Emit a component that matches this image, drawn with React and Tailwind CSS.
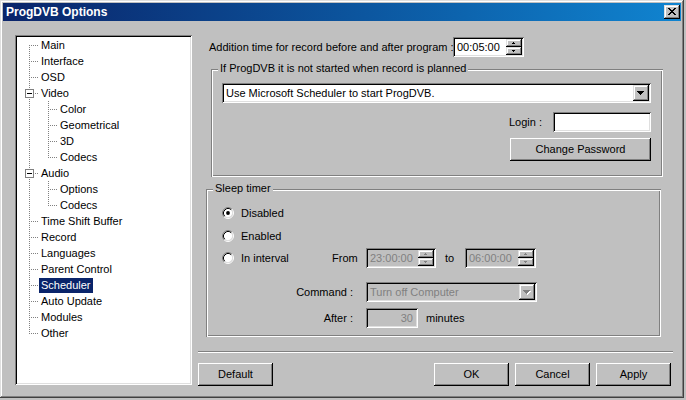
import React from "react";

const raised =
  "shadow-[inset_-1px_-1px_0_#000,inset_1px_1px_0_#fff,inset_-2px_-2px_0_#808080]";
const raised4 =
  "shadow-[inset_-1px_-1px_0_#000,inset_1px_1px_0_#dfdfdf,inset_-2px_-2px_0_#808080,inset_2px_2px_0_#fff]";
const sunken =
  "shadow-[inset_1px_1px_0_#808080,inset_-1px_-1px_0_#fff,inset_2px_2px_0_#000,inset_-2px_-2px_0_#dfdfdf]";
const etched =
  "shadow-[inset_1px_1px_0_#808080,inset_-1px_-1px_0_#fff,inset_2px_2px_0_#fff,inset_-2px_-2px_0_#808080]";

function Radio({ checked }) {
  return (
    <svg width="12" height="12" viewBox="0 0 12 12" className="shrink-0">
      <circle cx="6" cy="6" r="4.5" fill="#fff" />
      <path d="M2.11 9.89 A5.5 5.5 0 0 1 9.89 2.11" fill="none" stroke="#808080" />
      <path d="M9.89 2.11 A5.5 5.5 0 0 1 2.11 9.89" fill="none" stroke="#fff" />
      <path d="M2.82 9.18 A4.5 4.5 0 0 1 9.18 2.82" fill="none" stroke="#000" />
      <path d="M9.18 2.82 A4.5 4.5 0 0 1 2.82 9.18" fill="none" stroke="#dfdfdf" />
      {checked && <circle cx="6" cy="6" r="1.9" fill="#000" />}
    </svg>
  );
}

function Spin({ disabled }) {
  const c = disabled ? "#808080" : "#000";
  return (
    <div className="flex flex-col w-[16px] h-[16px] shrink-0">
      <div className={"h-[8px] w-[16px] bg-[#c0c0c0] " + raised4}>
        <svg width="16" height="8" className="block">
          <rect x="7" y="3" width="1" height="1" fill={c} />
          <rect x="6" y="4" width="3" height="1" fill={c} />
        </svg>
      </div>
      <div className={"h-[8px] w-[16px] bg-[#c0c0c0] " + raised4}>
        <svg width="16" height="8" className="block">
          <rect x="6" y="3" width="3" height="1" fill={c} />
          <rect x="7" y="4" width="1" height="1" fill={c} />
        </svg>
      </div>
    </div>
  );
}

function DropArrow({ disabled }) {
  const c = disabled ? "#808080" : "#000";
  return (
    <svg width="12" height="12" className="block">
      {disabled && (
        <g fill="#fff">
          <rect x="3" y="5" width="7" height="1" />
          <rect x="4" y="6" width="5" height="1" />
          <rect x="5" y="7" width="3" height="1" />
          <rect x="6" y="8" width="1" height="1" />
        </g>
      )}
      <g fill={c}>
        <rect x="2" y="4" width="7" height="1" />
        <rect x="3" y="5" width="5" height="1" />
        <rect x="4" y="6" width="3" height="1" />
        <rect x="5" y="7" width="1" height="1" />
      </g>
    </svg>
  );
}

function TimeField({ value, disabled, className }) {
  return (
    <div
      className={
        "flex items-center h-[20px] p-[2px] " +
        sunken +
        " " +
        (disabled ? "bg-[#c0c0c0] text-[#808080] " : "bg-white text-black ") +
        className
      }
    >
      <span className="flex-1 pl-[2px] leading-[13px] whitespace-nowrap">{value}</span>
      <Spin disabled={disabled} />
    </div>
  );
}

function Select({ value, disabled, className }) {
  return (
    <div
      className={
        "flex items-center h-[20px] p-[2px] " +
        sunken +
        " " +
        (disabled ? "bg-[#c0c0c0] text-[#808080] " : "bg-white text-black ") +
        className
      }
    >
      <span className="flex-1 pl-[2px] leading-[13px] whitespace-nowrap overflow-hidden">{value}</span>
      <div className={"w-[16px] h-[16px] bg-[#c0c0c0] flex items-center justify-center " + raised4}>
        <DropArrow disabled={disabled} />
      </div>
    </div>
  );
}

function Button({ children, className }) {
  return (
    <div
      className={
        "h-[23px] flex items-center justify-center bg-[#c0c0c0] leading-[13px] " +
        raised +
        " " +
        className
      }
    >
      {children}
    </div>
  );
}

const tree = [
  { t: "Main", l: 1, first: true },
  { t: "Interface", l: 1 },
  { t: "OSD", l: 1 },
  { t: "Video", l: 1, box: true },
  { t: "Color", l: 2 },
  { t: "Geometrical", l: 2 },
  { t: "3D", l: 2 },
  { t: "Codecs", l: 2, lastChild: true },
  { t: "Audio", l: 1, box: true },
  { t: "Options", l: 2 },
  { t: "Codecs", l: 2, lastChild: true },
  { t: "Time Shift Buffer", l: 1 },
  { t: "Record", l: 1 },
  { t: "Languages", l: 1 },
  { t: "Parent Control", l: 1 },
  { t: "Scheduler", l: 1, sel: true },
  { t: "Auto Update", l: 1 },
  { t: "Modules", l: 1 },
  { t: "Other", l: 1, last: true },
];

function Gutter({ it }) {
  const dot = {
    stroke: "#808080",
    strokeDasharray: "1 1",
    fill: "none",
    shapeRendering: "crispEdges",
  };
  if (it.l === 2) {
    return (
      <svg width="41" height="16" className="block shrink-0">
        <path d="M12.5 0V16" {...dot} />
        <path d={it.lastChild ? "M31.5 0V9" : "M31.5 0V16"} {...dot} />
        <path d="M33 8.5H40" {...dot} />
      </svg>
    );
  }
  if (it.box) {
    return (
      <svg width="22" height="16" className="block shrink-0">
        <path d="M12.5 0V4" {...dot} />
        <path d="M12.5 14V16" {...dot} />
        <rect x="8.5" y="4.5" width="8" height="8" fill="#fff" stroke="#808080" shapeRendering="crispEdges" />
        <rect x="10" y="8" width="5" height="1" fill="#000" />
        <path d="M18 8.5H21" {...dot} />
      </svg>
    );
  }
  const v = it.first ? "M12.5 8V16" : it.last ? "M12.5 0V9" : "M12.5 0V16";
  return (
    <svg width="22" height="16" className="block shrink-0">
      <path d={v} {...dot} />
      <path d="M14 8.5H21" {...dot} />
    </svg>
  );
}

export default function App() {
  return (
    <div className="w-[686px] h-[400px] bg-[#c0c0c0] overflow-hidden font-['Liberation_Sans',Arial,sans-serif] text-[11px] text-black leading-[13px]">
      <div
        className={
          "w-[684px] h-[398px] p-[3px] flex flex-col bg-[#c0c0c0] shadow-[inset_-1px_-1px_0_#404040,inset_1px_1px_0_#dfdfdf,inset_-2px_-2px_0_#808080,inset_2px_2px_0_#fff]"
        }
      >
        {/* Title bar */}
        <div className="h-[18px] flex items-center bg-linear-to-r from-[#0a246a] to-[#1084d0] shrink-0">
          <span className="pl-[3px] text-white font-bold text-[12px] leading-[14px] flex-1">ProgDVB Options</span>
          <div className={"w-[16px] h-[14px] mr-[1px] bg-[#c0c0c0] " + raised4}>
            <svg width="16" height="14" className="block">
              {[0, 1, 2, 3, 4, 5, 6].map((i) => (
                <g key={i} fill="#000">
                  <rect x={4 + i} y={3 + i} width="2" height="1" />
                  <rect x={10 - i} y={3 + i} width="2" height="1" />
                </g>
              ))}
            </svg>
          </div>
        </div>

        {/* Body */}
        <div className="flex flex-1">
          {/* Tree */}
          <div className={"ml-[12px] mt-[14px] w-[177px] h-[350px] bg-white p-[2px] " + sunken}>
            {tree.map((it, i) => (
              <div key={i} className="h-[16px] flex items-center">
                <Gutter it={it} />
                <span
                  className={
                    "px-[2px] leading-[15px] whitespace-nowrap " +
                    (it.sel ? "bg-[#0a246a] text-white" : "text-black")
                  }
                >
                  {it.t}
                </span>
              </div>
            ))}
          </div>

          {/* Right column */}
          <div className="flex flex-col ml-[6px] w-[475px]">
            <div className="flex items-center h-[20px] mt-[16px]">
              <span className="w-[255px] pl-[11px] whitespace-nowrap">
                Addition time for record before and after program :
              </span>
              <TimeField value="00:05:00" className="w-[71px]" />
            </div>

            {/* Group 1 */}
            <div className={"relative ml-[13px] w-[452px] h-[108px] mt-[12px] " + etched}>
              <span className="absolute left-[7px] top-[-7px] px-[2px] bg-[#c0c0c0] whitespace-nowrap">
                If ProgDVB it is not started when record is planned
              </span>
              <div className="flex flex-col items-end pt-[14px] pl-[11px] pr-[12px]">
                <Select value="Use Microsoft Scheduler to start ProgDVB." className="w-[429px]" />
                <div className="flex items-center mt-[9px]">
                  <span className="w-[44px] whitespace-nowrap">Login :</span>
                  <div className={"w-[98px] h-[20px] bg-white " + sunken}></div>
                </div>
                <Button className="w-[141px] mt-[6px]">Change Password</Button>
              </div>
            </div>

            {/* Group 2 */}
            <div className={"relative ml-[8px] w-[455px] h-[148px] mt-[12px] " + etched}>
              <span className="absolute left-[7px] top-[-7px] px-[2px] bg-[#c0c0c0] whitespace-nowrap">
                Sleep timer
              </span>
              <div className="flex flex-col pt-[14px] pl-[16px]">
                <div className="flex items-center h-[20px]">
                  <Radio checked />
                  <span className="ml-[7px]">Disabled</span>
                </div>
                <div className="flex items-center h-[20px] mt-[3px]">
                  <Radio />
                  <span className="ml-[7px]">Enabled</span>
                </div>
                <div className="flex items-center h-[20px] mt-[2px]">
                  <div className="flex items-center w-[110px]">
                    <Radio />
                    <span className="ml-[7px] whitespace-nowrap">In interval</span>
                  </div>
                  <span className="w-[34px]">From</span>
                  <TimeField value="23:00:00" disabled className="w-[70px]" />
                  <span className="ml-[9px] w-[20px]">to</span>
                  <TimeField value="06:00:00" disabled className="w-[71px]" />
                </div>
                <div className="flex items-center h-[20px] mt-[14px]">
                  <span className="w-[131px] text-right whitespace-nowrap">Command :</span>
                  <Select value="Turn off Computer" disabled className="ml-[13px] w-[171px]" />
                </div>
                <div className="flex items-center h-[20px] mt-[6px]">
                  <span className="w-[131px] text-right whitespace-nowrap">After :</span>
                  <div
                    className={
                      "ml-[13px] w-[52px] h-[20px] flex items-center justify-end pr-[5px] bg-[#c0c0c0] text-[#808080] " +
                      sunken
                    }
                  >
                    30
                  </div>
                  <span className="ml-[8px]">minutes</span>
                </div>
              </div>
            </div>

            {/* Separator */}
            <div className="mt-[14px] h-[2px] w-full border-t border-b border-t-[#808080] border-b-white"></div>

            {/* Buttons */}
            <div className="flex justify-between mt-[10px] pr-[2px]">
              <Button className="w-[75px]">Default</Button>
              <div className="flex gap-[6px]">
                <Button className="w-[75px]">OK</Button>
                <Button className="w-[75px]">Cancel</Button>
                <Button className="w-[75px]">Apply</Button>
              </div>
            </div>
          </div>
        </div>
      </div>
    </div>
  );
}
